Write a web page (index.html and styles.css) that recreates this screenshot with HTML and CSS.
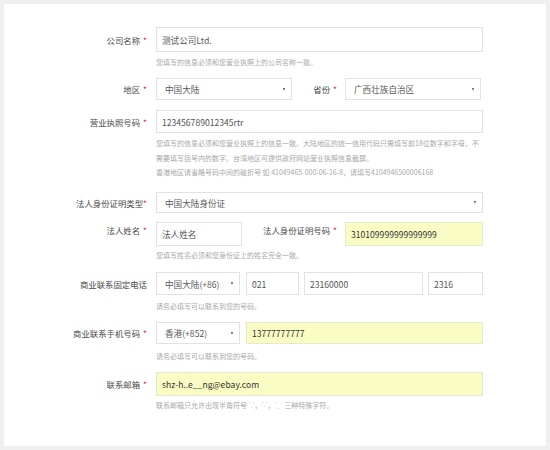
FILE: index.html
```html
<!DOCTYPE html>
<html lang="zh">
<head>
<meta charset="utf-8">
<link rel="stylesheet" href="styles.css">
</head>
<body>
<div class="card">
  <div class="row r1">
    <div class="label">公司名称<span class="req">*</span></div>
    <div class="box w-full h25">测试公司Ltd.</div>
  </div>
  <div class="hint">您填写的信息必须和您营业执照上的公司名称一致。</div>

  <div class="row r2">
    <div class="label">地区<span class="req">*</span></div>
    <div class="box sel w136 h22"><span>中国大陆</span><i class="arrow"></i></div>
    <div class="sublabel w53">省份<span class="req">*</span></div>
    <div class="box sel w136 h22"><span>广西壮族自治区</span><i class="arrow"></i></div>
  </div>

  <div class="row r3">
    <div class="label">营业执照号码<span class="req">*</span></div>
    <div class="box w-full h23">123456789012345rtr</div>
  </div>
  <div class="hint tall">您填写的信息必须和您营业执照上的信息一致。大陆地区的统一信用代码只需填写前18位数字和字母，不<br>需要填写括号内的数字。台湾地区可提供政府网站营业执照信息截屏。</div>
  <div class="hint tall">香港地区请省略号码中间的破折号 如 41049465-000-06-16-8，请填写4104946500006168</div>

  <div class="row r4">
    <div class="label">法人身份证明类型<span class="req tight">*</span></div>
    <div class="box sel w-full h21"><span>中国大陆身份证</span><i class="arrow"></i></div>
  </div>

  <div class="row r5 top">
    <div class="label pt">法人姓名<span class="req">*</span></div>
    <div class="box w86 h24">法人姓名</div>
    <div class="sublabel w103 pt">法人身份证明号码<span class="req">*</span></div>
    <div class="box yellow w138 h24">310109999999999999</div>
  </div>
  <div class="hint h-r5">您填写姓名必须和您身份证上的姓名完全一致。</div>

  <div class="row r6">
    <div class="label">商业联系固定电话</div>
    <div class="box sel w84 h23"><span>中国大陆(+86)</span><i class="arrow"></i></div>
    <div class="box w53 h23 ml6">021</div>
    <div class="box w119 h23 ml5">23160000</div>
    <div class="box w55 h23 ml5">2316</div>
  </div>
  <div class="hint h-r6">请务必填写可以联系到您的号码。</div>

  <div class="row r7">
    <div class="label">商业联系手机号码<span class="req">*</span></div>
    <div class="box sel w84 h22"><span>香港(+852)</span><i class="arrow"></i></div>
    <div class="box yellow w237 h22 ml6">13777777777</div>
  </div>
  <div class="hint h-r7">请务必填写可以联系到您的号码。</div>

  <div class="row r8">
    <div class="label">联系邮箱<span class="req">*</span></div>
    <div class="box yellow w-full h24">shz-h..e__ng@ebay.com</div>
  </div>
  <div class="hint h-r8">联系邮箱只允许出现半角符号 <span class="faint">'.'</span>，<span class="faint">'-'</span>，<span class="faint">'_'</span> 三种特殊字符。</div>
</div>
</body>
</html>
```
FILE: styles.css
```css
html, body {
  margin: 0;
  padding: 0;
  background: #efefef;
}
body {
  font-family: "Noto Sans CJK SC", "Liberation Sans", sans-serif;
  width: 550px;
  height: 450px;
  overflow: hidden;
}
.card {
  margin: 4px;
  width: 542px;
  height: 442px;
  background: #fff;
  padding-top: 23px;
  box-sizing: border-box;
}
.row {
  display: flex;
  align-items: center;
}
.row.top {
  align-items: flex-start;
}
.label {
  width: 143px;
  flex: none;
  margin-right: 9px;
  text-align: right;
  font-size: 8.4px;
  line-height: 12px;
  color: #4a4a4a;
}
.sublabel {
  flex: none;
  box-sizing: border-box;
  padding-right: 8px;
  text-align: right;
  font-size: 8.4px;
  line-height: 12px;
  color: #4a4a4a;
}
.pt { padding-top: 2px; }
.req {
  color: #e4393c;
  margin-left: 3px;
}
.req.tight { margin-left: 0; }
.box {
  flex: none;
  box-sizing: border-box;
  border: 1px solid #e2e2e2;
  background: #fff;
  display: flex;
  align-items: center;
  padding-left: 5px;
  font-size: 8.6px;
  color: #555;
  white-space: nowrap;
}
.sel {
  padding-left: 8px;
  padding-right: 6px;
  color: #5a5a5a;
}
.arrow {
  margin-left: auto;
  width: 0;
  height: 0;
  border-left: 1.5px solid transparent;
  border-right: 1.5px solid transparent;
  border-top: 3px solid #555;
}
.yellow {
  background: #fafdc3;
  border-color: #e6e8cf;
  color: #333;
}
.w-full { width: 327px; }
.w136 { width: 136px; }
.w53 { width: 53px; }
.w86 { width: 86px; }
.w103 { width: 103px; }
.w138 { width: 138px; }
.w84 { width: 84px; }
.w119 { width: 119px; }
.w55 { width: 55px; }
.w237 { width: 237px; }
.ml6 { margin-left: 6px; }
.ml5 { margin-left: 5px; }
.h21 { height: 21px; }
.h22 { height: 22px; }
.h23 { height: 23px; }
.h24 { height: 24px; }
.h25 { height: 25px; }

.hint {
  margin-left: 152px;
  margin-top: 3px;
  font-size: 7px;
  line-height: 14px;
  color: #a8a8a8;
  white-space: nowrap;
}
.hint.tall { line-height: 14.5px; margin-top: 0; }
.r3 + .hint.tall { margin-top: 3px; }
.faint { color: #d6d6d6; }

.r2 { margin-top: 9px; }
.r3 { margin-top: 10px; }
.r4 { margin-top: 12.5px; }
.r5 { margin-top: 9px; }
.h-r5 { margin-top: 2px; }
.r6 { margin-top: 10px; }
.h-r6 { margin-top: 3.5px; }
.r7 { margin-top: 9.5px; }
.h-r7 { margin-top: 5px; }
.r8 { margin-top: 9px; }
.h-r8 { margin-top: 2px; }
```
